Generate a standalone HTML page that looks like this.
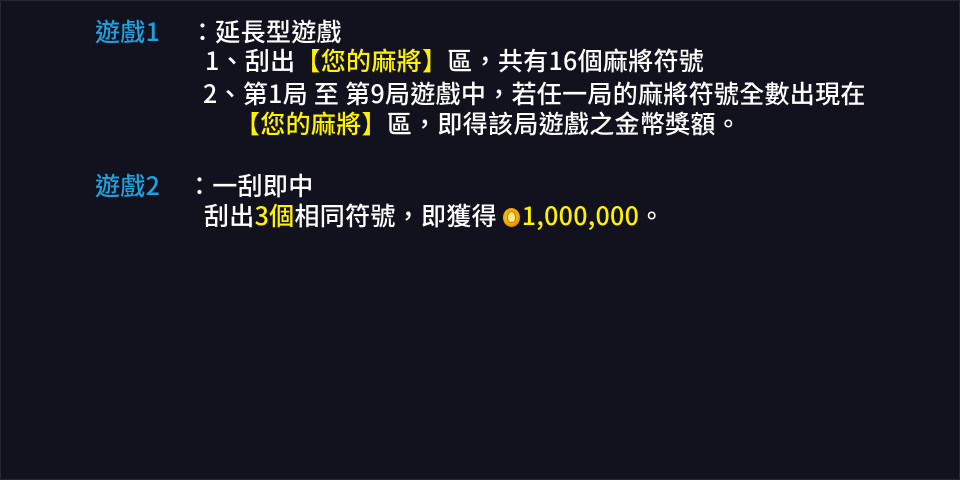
<!DOCTYPE html>
<html><head><meta charset="utf-8"><style>
html,body{margin:0;padding:0}
body{width:960px;height:480px;background:#12121e;position:relative;overflow:hidden;font-family:"Liberation Sans","Noto Sans CJK TC",sans-serif;color:#fff;box-sizing:border-box;border:1px solid #262632}
.l{position:absolute;white-space:nowrap;line-height:30px;font-family:"Noto Sans CJK TC",sans-serif;font-size:25px;letter-spacing:0.3px;font-weight:500}
.b{color:#1ea0e0}
.y{color:#fff200}
.coin{display:inline-block;width:17px;height:19px;border-radius:50%;background:radial-gradient(circle at 45% 45%,#ffd23a 0,#f0a800 55%,#b86a00 100%);vertical-align:-2px;margin-right:2px;position:relative}
.coin:after{content:"";position:absolute;left:4px;top:3px;width:7px;height:10px;border-radius:50% 50% 40% 40%;background:#ffe680;border:1px solid #c07800}
</style></head><body>
<div class="l b" style="left:94px;top:15px">遊戲1</div>
<div class="l" style="left:189px;top:15px">：延長型遊戲</div>
<div class="l" style="left:204px;top:44px">1、刮出<span class="y">【您的麻將】</span>區，共有16個麻將符號</div>
<div class="l" style="left:202px;top:77px">2、第1局 至 第9局遊戲中，若任一局的麻將符號全數出現在</div>
<div class="l" style="left:234px;top:107px"><span class="y">【您的麻將】</span>區，即得該局遊戲之金幣獎額。</div>
<div class="l b" style="left:94px;top:169px">遊戲2</div>
<div class="l" style="left:186px;top:169px">：一刮即中</div>
<div class="l" style="left:203px;top:199px">刮出<span class="y">3個</span>相同符號，即獲得 <span class="coin"></span><span class="y">1,000,000</span>。</div>
</body></html>
